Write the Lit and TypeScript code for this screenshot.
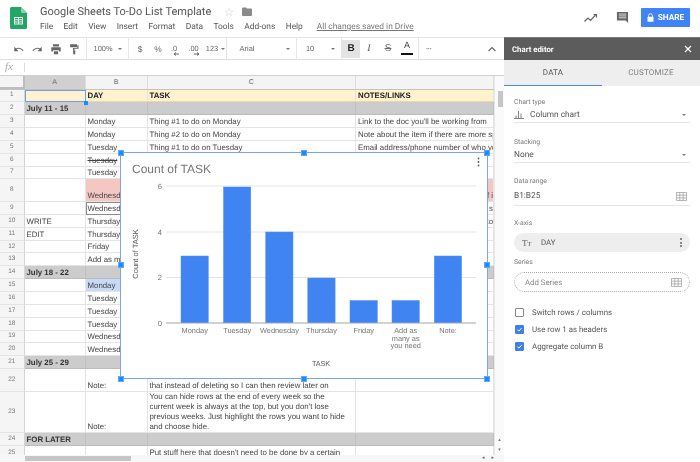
import { LitElement, html, css, svg, nothing } from "lit";
import { customElement } from "lit/decorators.js";

type Row = { n: number; h?: string; cls?: string; a?: string; b?: string; c?: string | string[]; d?: string; bCls?: string; dCls?: string };

const rows: Row[] = [
  { n: 1, cls: "head", b: "DAY", c: "TASK", d: "NOTES/LINKS" },
  { n: 2, cls: "band", a: "July 11 - 15" },
  { n: 3, b: "Monday", c: "Thing #1 to do on Monday", d: "Link to the doc you'll be working from" },
  { n: 4, b: "Monday", c: "Thing #2 to do on Monday", d: "Note about the item if there are more specifics" },
  { n: 5, b: "Tuesday", c: "Thing #1 to do on Tuesday", d: "Email address/phone number of who you need" },
  { n: 6, b: "Tuesday", bCls: "strike" },
  { n: 7, b: "Tuesday" },
  { n: 8, h: "r8", cls: "pink", b: "Wednesday", d: "if i", dCls: "end" },
  { n: 9, b: "Wednesday", bCls: "outlined", d: "s", dCls: "end" },
  { n: 10, a: "WRITE", b: "Thursday", d: ") to", dCls: "end" },
  { n: 11, a: "EDIT", b: "Thursday" },
  { n: 12, b: "Friday" },
  { n: 13, b: "Add as many as you need" },
  { n: 14, cls: "band", a: "July 18 - 22" },
  { n: 15, b: "Monday", bCls: "picked" },
  { n: 16, b: "Tuesday" },
  { n: 17, b: "Tuesday" },
  { n: 18, b: "Tuesday" },
  { n: 19, b: "Wednesday" },
  { n: 20, b: "Wednesday" },
  { n: 21, cls: "band", a: "July 25 - 29" },
  { n: 22, h: "r22", b: "Note:", c: "that instead of deleting so I can then review later on" },
  {
    n: 23, h: "r23", b: "Note:",
    c: ["You can hide rows at the end of every week so the", "current week is always at the top, but you don't lose", "previous weeks. Just highlight the rows you want to hide", "and choose hide."],
  },
  { n: 24, cls: "band", a: "FOR LATER" },
  { n: 25, h: "r25", c: "Put stuff here that doesn't need to be done by a certain" },
];

const bars = [
  { x: 181, top: 256, label: ["Monday"] },
  { x: 223.5, top: 187, label: ["Tuesday"] },
  { x: 265.7, top: 232, label: ["Wednesday"] },
  { x: 307.8, top: 278, label: ["Thursday"] },
  { x: 350, top: 300.5, label: ["Friday"] },
  { x: 392, top: 300.5, label: ["Add as", "many as", "you need"] },
  { x: 434.3, top: 256, label: ["Note:"] },
];
const ticks = [
  { y: 186, t: "6" },
  { y: 232, t: "4" },
  { y: 277.5, t: "2" },
  { y: 323, t: "0" },
];
const handles = [
  [0, 0], [183, 0], [366, 0], [0, 112.5], [366, 112.5], [0, 226.5], [183, 226.5], [366, 226.5],
];

const gridIcon = svg`<svg class="gridico" viewBox="0 0 11 9"><path d="M.5.5h10v8H.5zM.5 3.2h10M.5 5.9h10M3.8.5v8M7.2.5v8" fill="none" stroke="#9a9a9a" stroke-width=".7"/></svg>`;
const tick = svg`<svg viewBox="0 0 10 10" class="tick"><path d="M2 5.2l2.1 2.1L8 3" fill="none" stroke="#fff" stroke-width="1.4"/></svg>`;

const i = (d: string) => html`<svg class="ti" viewBox="0 0 14 14"><path d=${d} fill="#666" /></svg>`;
const arrowL = svg`<svg class="arr" viewBox="0 0 6 4"><path d="M6 2H1.500M3 .5L1 2l2 1.500" fill="none" stroke="#444" stroke-width=".8"/></svg>`;
const arrowR = svg`<svg class="arr" viewBox="0 0 6 4"><path d="M0 2h4.500M3 .5L5 2 3 3.500" fill="none" stroke="#444" stroke-width=".8"/></svg>`;

const tools: { w: number; c?: unknown; k?: string }[] = [
  { w: 9.5 },
  { w: 18.5, c: html`<svg class="ti" viewBox="0 0 14 14"><path d="M2 8.5C3.5 5.6 8.5 4.8 12 8.8" fill="none" stroke="#666" stroke-width="1.3"/><path d="M1.5 4.5v5h5z" fill="#666"/></svg>` },
  { w: 18.5, c: html`<svg class="ti" viewBox="0 0 14 14"><path d="M12 8.5C10.500 5.600 5.500 4.800 2 8.800" fill="none" stroke="#666" stroke-width="1.3"/><path d="M12.500 4.500v5h-5z" fill="#666"/></svg>` },
  { w: 18.5, c: i("M3.500 1.500h7v2.500h-7zM1.500 5h11v5h-2v-1.500h-7V10h-2zM4.500 9.500h5v3.500h-5z") },
  { w: 18.5, c: i("M2.500 1.500h8v3.500h-8zM10.800 2.500h1.500v4.200H7.500v2H8.500v4.500H6V7.700h-.2V5.700h5z") },
  { w: 2.5 }, { k: "sep", w: 1 },
  { w: 7 }, { w: 18, k: "t", c: "100%" }, { w: 5 }, { w: 6, k: "caret" }, { w: 5 }, { k: "sep", w: 1 },
  { w: 7 }, { w: 8, k: "t big", c: "$" }, { w: 10 }, { w: 8, k: "t big", c: "%" }, { w: 7 },
  { w: 10, k: "t dec", c: html`.0${arrowL}` }, { w: 8 },
  { w: 13, k: "t dec", c: html`.00${arrowR}` }, { w: 5 }, { w: 14, k: "t", c: "123" }, { w: 1 }, { w: 5, k: "caret" }, { w: 1 }, { k: "sep", w: 1 },
  { w: 12 }, { w: 16, k: "t", c: "Arial" }, { w: 30 }, { w: 5, k: "caret" }, { w: 6 }, { k: "sep", w: 1 },
  { w: 9 }, { w: 8, k: "t", c: "10" }, { w: 16 }, { w: 5, k: "caret" }, { w: 6 }, { k: "sep", w: 1 },
  { w: 18, k: "t active", c: "B" }, { w: 1 },
  { w: 16, k: "t ital", c: "I" }, { w: 3 },
  { w: 16, k: "t str", c: "S" }, { w: 3 },
  { w: 16, k: "t under", c: "A" }, { w: 3 }, { k: "sep", w: 1 },
  { w: 2 }, { w: 16, k: "t dots", c: "•••" },
  { w: 47 },
  { w: 16, c: html`<svg class="ti" viewBox="0 0 14 14"><path d="M3 9.300l4-4 4 4" fill="none" stroke="#666" stroke-width="1.400"/></svg>` },
];

@customElement("app-root")
export class AppRoot extends LitElement {
  static styles = css`
    :host { display: block; width: 700px; height: 462px; overflow: hidden; background: #fff; font-family: "Liberation Sans", Arial, sans-serif; color: #444; text-rendering: geometricPrecision; }
    * { box-sizing: border-box; }
    .page { width: 700px; height: 462px; filter: blur(0.3px); }
    .top { height: 37px; display: flex; align-items: flex-start; font-family: Roboto, sans-serif; }
    .logo { width: 17px; height: 22px; margin: 7px 13px 0 10px; flex: none; }
    .titles { display: flex; flex-direction: column; padding-top: 4px; flex: 1; }
    .title-row { display: flex; align-items: center; height: 15px; }
    .title { font-size: 11px; color: #555; width: 184px; white-space: nowrap; }
    .star { width: 10px; height: 10px; margin-right: 8px; }
    .folder { width: 10px; height: 9px; }
    .menu { display: flex; gap: 10.400px; font-size: 8.400px; color: #555; height: 14px; align-items: center; margin-top: 1px; white-space: nowrap; }
    .saved { margin-left: 3.500px; color: #777; text-decoration: underline; }
    .actions { display: flex; align-items: center; height: 19px; margin: 8px 10px 0 0; }
    .trend { width: 14px; height: 10px; margin-right: 18px; }
    .cmt { width: 13px; height: 13px; margin-right: 12px; }
    .share { width: 49px; height: 19px; background: #3f84f6; color: #fff; font: 700 8.300px Roboto, sans-serif; display: flex; align-items: center; justify-content: center; gap: 4px; border-radius: 1px; }
    .share svg { width: 7px; height: 9px; }

    .main { display: flex; height: 425px; }
    .left { width: 504px; flex: none; display: flex; flex-direction: column; position: relative; }
    .toolbar { height: 23px; border-top: 1px solid #e4e4e4; border-bottom: 1px solid #e0e0e0; display: flex; align-items: center; flex: none; }
    .tb { flex: none; display: flex; align-items: center; justify-content: center; height: 100%; font-size: 7.400px; color: #666; white-space: nowrap; position: relative; }
    .tb.sep { background: #e6e6e6; }
    .tb.big { font-size: 8.400px; }
    .tb.caret::after { content: ""; border-left: 2px solid transparent; border-right: 2px solid transparent; border-top: 2.200px solid #777; }
    .tb.active { background: #e3e3e3; color: #222; font-weight: 700; font-size: 10px; height: 18px; border-radius: 1px; }
    .tb.ital { font: italic 10px "Liberation Serif", serif; color: #555; }
    .tb.str { font-size: 10px; text-decoration: line-through; color: #666; }
    .tb.under { font-size: 9px; color: #444; align-items: flex-start; padding-top: 2px; }
    .tb.under::after { content: ""; position: absolute; left: 2px; right: 2px; bottom: 4px; height: 2px; background: #111; }
    .tb.dots { font-size: 4px; letter-spacing: 0.500px; }
    .tb .arr { position: absolute; width: 6px; height: 4px; right: 0; bottom: 3px; }
    .ti { width: 12px; height: 12px; }
    .fx { height: 15.500px; flex: none; display: flex; align-items: center; border-bottom: 1px solid #d0d0d0; }
    .fx i { font: italic 11px "Liberation Serif", serif; color: #aaa; width: 24px; padding-left: 5px; }
    .fx b { width: 1px; height: 9px; background: #ddd; }

    .sheet { flex: 1; position: relative; overflow: hidden; display: flex; }
    .grid { width: 494px; flex: none; overflow: hidden; }
    .r { display: grid; grid-template-columns: 24.500px 61px 62px 208.500px 138px; height: 12.850px; font-size: 7.850px; color: #444; }
    .r.hdr { height: 14px; font-size: 7px; color: #666; background: #f4f4f4; border-bottom: 1px solid #c4c4c4; text-align: center; line-height: 13px; }
    .hdr > div { border-right: 1px solid #dcdcdc; }
    .hdr .corner { border-right: 2px solid #bdbdbd; border-bottom: 2px solid #bdbdbd; }
    .hdr .sel { background: #d0d0d0; }
    .r.r8 { height: 22.700px; }
    .r.r22 { height: 22.600px; }
    .r.r23 { height: 41.800px; }
    .r.r25 { height: 12px; }
    .c { border-right: 1px solid #e4e4e4; border-bottom: 1px solid #e4e4e4; padding: 0 2px; overflow: hidden; white-space: nowrap; display: flex; flex-direction: column; justify-content: flex-end; line-height: 10px; min-width: 0; }
    .c.num { background: #f5f5f5; color: #777; font-size: 6.400px; text-align: center; justify-content: center; padding: 0; border-right: 1px solid #d4d4d4; }
    .c.end { align-items: flex-end; padding-right: 0; }
    .head .c:not(.num) { background: #fff2cc; font-weight: 700; color: #222; border-bottom-color: #e4d9b4; }
    .band .c:not(.num) { background: #cccccc; font-weight: 700; color: #333; border-bottom-color: #bbb; border-right-color: #c0c0c0; }
    .pink .c:not(.num):not(.blank) { background: #f4c7c3; }
    .c.a1 { outline: 1px solid #6f9cf0; outline-offset: -1px; }
    .c.strike { text-decoration: line-through; }
    .c.outlined { outline: 1px solid #8a8a8a; outline-offset: -1px; }
    .c.picked { background: #c9daf8; }
    .r25 .c { justify-content: flex-start; padding-top: 2px; }
    .cellhandle { position: absolute; left: 83.500px; top: 25px; width: 4px; height: 4px; background: #1a8cff; }

    .vbar { width: 10px; flex: none; background: #fafafa; border-left: 1px solid #e8e8e8; position: relative; }
    .vthumb { position: absolute; left: 3px; right: 1px; top: 15px; height: 16px; background: #c6c6c6; }
    .varrows { position: absolute; left: 0; right: 0; bottom: 0; font-size: 5px; color: #777; text-align: center; line-height: 10px; }
    .hbar { height: 7.500px; flex: none; background: #f7f7f7; display: flex; align-items: center; padding-left: 25px; }
    .hthumb { width: 106px; height: 5px; background: #c6c6c6; }
    .harrows { margin-left: auto; margin-right: 10px; display: flex; gap: 7px; font-size: 5px; color: #666; }

    .chart { position: absolute; left: 120px; top: 76.500px; width: 367.500px; height: 227px; background: #fff; border: 1px solid #7aa5ee; z-index: 2; }
    .chart svg.plot { display: block; width: 365.500px; height: 225px; }
    .chart text { font-family: "Liberation Sans", Arial, sans-serif; fill: #757575; }
    .chart text.ax { fill: #555; }
    .hd { position: absolute; width: 6px; height: 6px; margin: -3.500px 0 0 -3.500px; background: #1a8cff; border: 1px solid #5aaaff; }

    .panel { flex: 1; display: flex; flex-direction: column; font-family: Roboto, sans-serif; }
    .ptitle { height: 23px; flex: none; background: #5c5c5c; color: #fff; display: flex; align-items: center; justify-content: space-between; padding: 0 8px; font-size: 7.800px; font-weight: 700; border-top: 1px solid #777; }
    .ptitle svg { width: 8px; height: 8px; }
    .tabs { height: 26px; flex: none; display: flex; background: #eeeeee; font-size: 8px; color: #666; letter-spacing: .2px; }
    .tab { width: 98px; display: flex; align-items: center; justify-content: center; border-bottom: 1px solid transparent; }
    .tab.on { border-bottom-color: #4a86f0; color: #555; }
    .tab.off { color: #808080; }
    .pbody { padding: 11px 10px 0 10px; display: flex; flex-direction: column; }
    .lab { font-size: 6.800px; color: #777; height: 10px; line-height: 10px; }
    .val { height: 16px; border-bottom: 1px solid #e6e6e6; display: flex; align-items: center; font-size: 8.300px; line-height: 10px; color: #555; justify-content: space-between; }
    .val .l { display: flex; align-items: center; gap: 6px; }
    .val.tall { height: 20px; padding-top: 1px; }
    .val .dn { width: 0; height: 0; border-left: 2.500px solid transparent; border-right: 2.500px solid transparent; border-top: 2.800px solid #777; margin-right: 4px; }
    .bi { width: 10px; height: 9px; }
    .gridico { width: 11px; height: 9px; margin-right: 3px; }
    .mt14 { margin-top: 14px; }
    .mt13 { margin-top: 13px; }
    .mt { margin-top: 12px; }
    .mt5 { margin-top: 5px; }
    .pill { height: 19px; border-radius: 10px; background: #eeeeee; margin-top: 5px; display: flex; align-items: center; padding: 0 8px; font-size: 7.800px; color: #555; }
    .pill .tt { font: 9px "Liberation Serif", serif; color: #666; width: 19px; }
    .pill .vd { margin-left: auto; display: flex; flex-direction: column; gap: 1.200px; }
    .pill .vd span { width: 2px; height: 2px; background: #666; border-radius: 50%; }
    .dash { height: 20px; border: 1px dotted #aaa; border-radius: 10px; margin-top: 5px; display: flex; align-items: center; justify-content: space-between; padding: 0 4px 0 10px; font-size: 7.800px; color: #888; }
    .checks { margin-top: 11.500px; display: flex; flex-direction: column; }
    .chk { height: 17px; display: flex; align-items: center; gap: 8px; font-size: 7.900px; color: #555; padding-left: 1px; }
    .box { width: 9px; height: 9px; border: 1px solid #888; border-radius: 1px; background: #fff; flex: none; }
    .box.on { background: #3f7fe8; border-color: #3f7fe8; display: flex; }
    .tick { width: 100%; height: 100%; }
  `;

  renderRow(r: Row) {
    const cText = Array.isArray(r.c) ? r.c.map((t) => html`<div>${t}</div>`) : r.c ?? "";
    return html`<div class="r ${r.h ?? ""} ${r.cls ?? ""}">
      <div class="c num">${r.n}</div>
      <div class="c blank ${r.n === 1 ? "a1" : ""}">${r.a ?? ""}</div>
      <div class="c ${r.bCls ?? ""}">${r.b ?? ""}</div>
      <div class="c">${cText}</div>
      <div class="c ${r.dCls ?? ""}">${r.d ?? ""}</div>
    </div>`;
  }

  renderChart() {
    return svg`<svg class="plot" viewBox="121 153 365.500 225">
      <text x="132" y="173" font-size="12">Count of TASK</text>
      ${ticks.map((t) => svg`
        <line x1="166" x2="476" y1=${t.y} y2=${t.y} stroke=${t.t === "0" ? "#9a9a9a" : "#e2e2e2"} stroke-width=".9"/>
        <text x="162" y=${t.y + 2.7} font-size="7.600" text-anchor="end">${t.t}</text>`)}
      ${bars.map((b) => svg`
        <rect x=${b.x} y=${b.top} width="27.300" height=${322.6 - b.top} fill="#3f84f0" stroke="#4f90f5" stroke-width=".5"/>
        ${b.label.map((l, n) => svg`<text x=${b.x + 13.7} y=${333 + n * 7.5} font-size="7.400" text-anchor="middle">${l}</text>`)}`)}
      <text class="ax" transform="translate(137.500 254) rotate(-90)" font-size="7.500" text-anchor="middle">Count of TASK</text>
      <text class="ax" x="321" y="366" font-size="7.200" text-anchor="middle">TASK</text>
      <g fill="#555"><circle cx="478.500" cy="158.500" r=".9"/><circle cx="478.500" cy="162" r=".9"/><circle cx="478.500" cy="165.500" r=".9"/></g>
    </svg>`;
  }

  render() {
    return html`<div class="page">
      <div class="top">
        <svg class="logo" viewBox="0 0 17 22">
          <path d="M1.500 0H11l6 6v14.500a1.500 1.500 0 0 1-1.500 1.500h-14A1.500 1.500 0 0 1 0 20.500v-19A1.500 1.500 0 0 1 1.500 0z" fill="#23a566"/>
          <path d="M11 0l6 6h-4.500A1.500 1.500 0 0 1 11 4.500z" fill="#8ed1b1"/>
          <path d="M4 10h9v7.500H4zM5 11v1.300h3V11zm4 0v1.300h3V11zm-4 2.300v1.200h3v-1.200zm4 0v1.200h3v-1.200zm-4 2.200v1h3v-1zm4 0v1h3v-1z" fill="#f1f1f1" fill-rule="evenodd"/>
        </svg>
        <div class="titles">
          <div class="title-row">
            <span class="title">Google Sheets To-Do List Template</span>
            <svg class="star" viewBox="0 0 24 24"><path d="M12 3l2.700 6.300 6.800.6-5.200 4.500 1.600 6.700L12 17l-5.900 3.600 1.600-6.700L2.500 9.900l6.800-.6z" fill="none" stroke="#ddd" stroke-width="1.600"/></svg>
            <svg class="folder" viewBox="0 0 20 18"><path d="M2 1h6l2 2h8a2 2 0 0 1 2 2v11a2 2 0 0 1-2 2H2a2 2 0 0 1-2-2V3a2 2 0 0 1 2-2z" fill="#8a8a8a"/></svg>
          </div>
          <div class="menu">
            <span>File</span><span>Edit</span><span>View</span><span>Insert</span><span>Format</span><span>Data</span><span>Tools</span><span>Add-ons</span><span>Help</span>
            <span class="saved">All changes saved in Drive</span>
          </div>
        </div>
        <div class="actions">
          <svg class="trend" viewBox="0 0 14 10"><path d="M.5 8.500l3.500-3.500 2.500 2.500 5-5.500M9.500 1.500h3v3" fill="none" stroke="#666" stroke-width="1.200"/></svg>
          <svg class="cmt" viewBox="0 0 14 14"><path d="M1 1h12v12l-2.700-2.700H1z" fill="#666"/><path d="M3 3.300h8M3 5.300h8M3 7.300h8" stroke="#fff" stroke-width=".8"/></svg>
          <div class="share">
            <svg viewBox="0 0 7 9"><path d="M1.600 4V2.600a1.900 1.900 0 0 1 3.800 0V4" fill="none" stroke="#fff" stroke-width=".9"/><rect x=".5" y="3.800" width="6" height="5" rx=".6" fill="#fff"/></svg>
            SHARE
          </div>
        </div>
      </div>
      <div class="main">
        <div class="left">
          <div class="toolbar">
            ${tools.map((t) => html`<div class="tb ${t.k ?? ""}" style="width:${t.w}px">${t.c ?? nothing}</div>`)}
          </div>
          <div class="fx"><i>fx</i><b></b></div>
          <div class="sheet">
            <div class="grid">
              <div class="r hdr"><div class="corner"></div><div class="sel">A</div><div>B</div><div>C</div><div></div></div>
              ${rows.map((r) => this.renderRow(r))}
            </div>
            <div class="vbar">
              <div class="vthumb"></div>
              <div class="varrows"><div>▴</div><div>▾</div></div>
            </div>
            <div class="cellhandle"></div>
            <div class="chart">
              ${this.renderChart()}
              ${handles.map(([x, y]) => html`<div class="hd" style="left:${x}px;top:${y}px"></div>`)}
            </div>
          </div>
          <div class="hbar"><div class="hthumb"></div><div class="harrows"><span>◂</span><span>▸</span></div></div>
        </div>
        <div class="panel">
          <div class="ptitle">Chart editor
            <svg viewBox="0 0 8 8"><path d="M1 1l6 6M7 1L1 7" stroke="#fff" stroke-width="1.300"/></svg>
          </div>
          <div class="tabs"><div class="tab on">DATA</div><div class="tab off">CUSTOMIZE</div></div>
          <div class="pbody">
            <div class="lab">Chart type</div>
            <div class="val"><span class="l">
              <svg class="bi" viewBox="0 0 10 9"><path d="M0 8.500h10M2 8V5.500M4.500 8V1M7 8V3.500" stroke="#777" stroke-width=".9" fill="none"/></svg>
              Column chart</span><span class="dn"></span></div>
            <div class="lab mt14">Stacking</div>
            <div class="val"><span>None</span><span class="dn"></span></div>
            <div class="lab mt13">Data range</div>
            <div class="val tall"><span>B1:B25</span>${gridIcon}</div>
            <div class="lab mt">X-axis</div>
            <div class="pill"><span class="tt">Tт</span>DAY<span class="vd"><span></span><span></span><span></span></span></div>
            <div class="lab mt5">Series</div>
            <div class="dash">Add Series ${gridIcon}</div>
            <div class="checks">
              <div class="chk"><span class="box"></span>Switch rows / columns</div>
              <div class="chk"><span class="box on">${tick}</span>Use row 1 as headers</div>
              <div class="chk"><span class="box on">${tick}</span>Aggregate column B</div>
            </div>
          </div>
        </div>
      </div>
    </div>`;
  }
}
